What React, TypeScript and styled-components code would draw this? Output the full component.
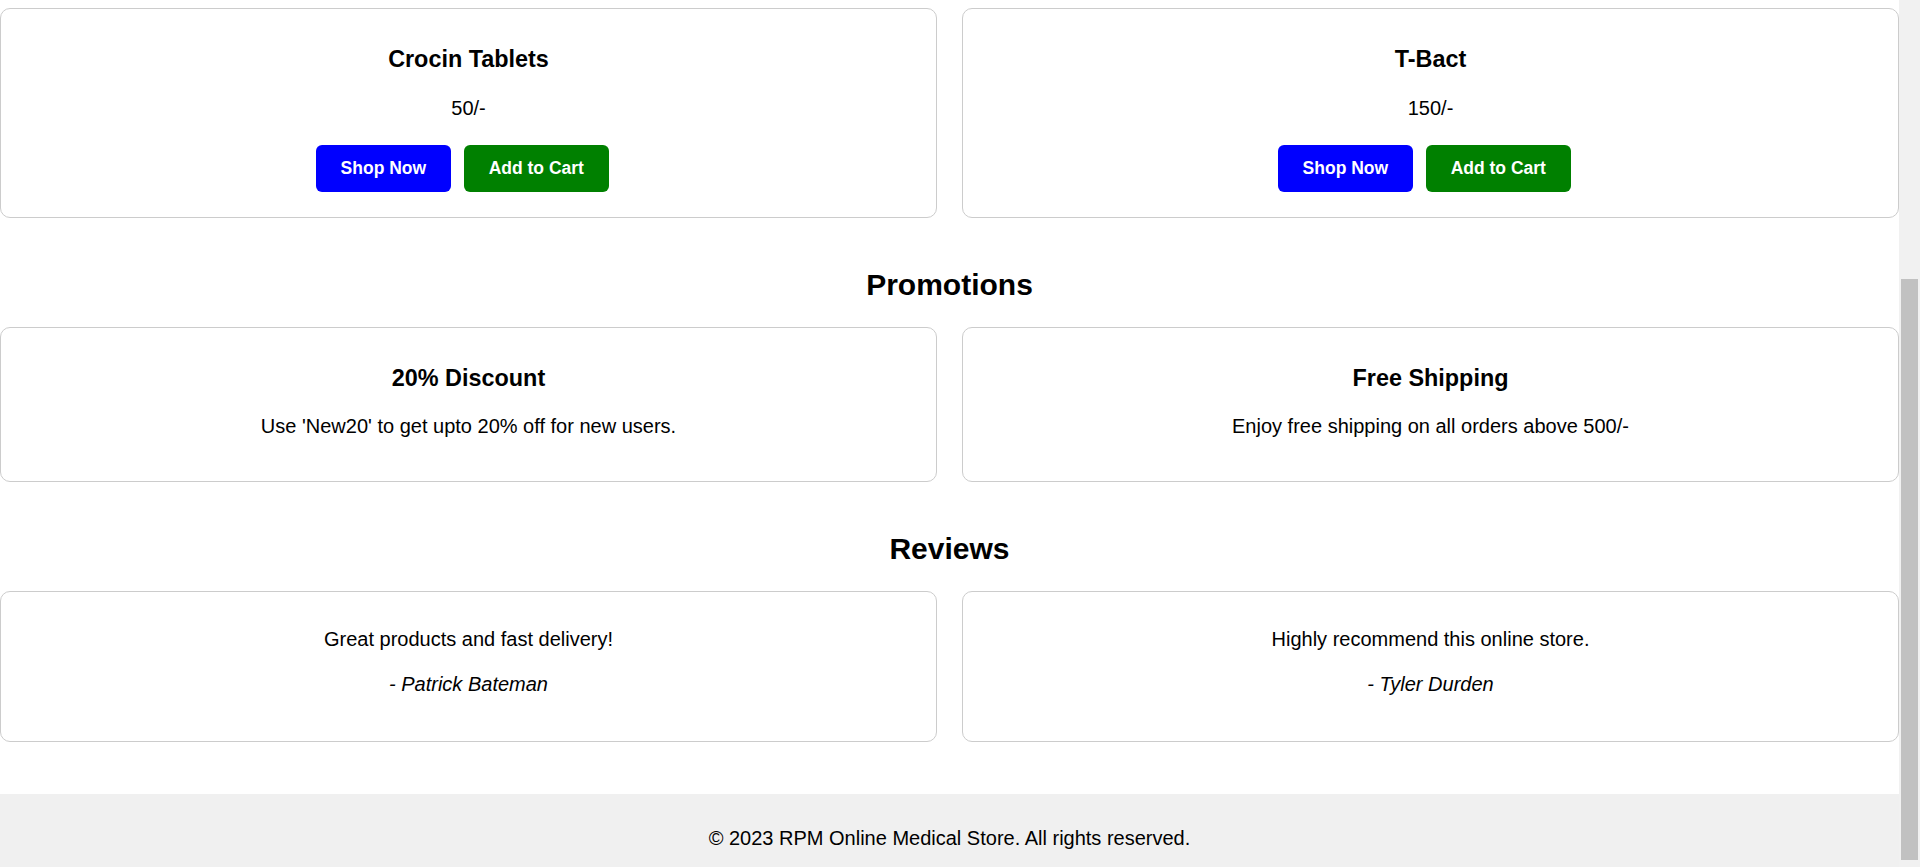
import React from "react";
import styled, { createGlobalStyle } from "styled-components";

const GlobalStyle = createGlobalStyle`
  html, body {
    margin: 0;
    padding: 0;
    background: #ffffff;
  }
  body {
    font-family: "Liberation Sans", Arial, Helvetica, sans-serif;
    color: #000000;
    overflow: hidden;
  }
`;

const Page = styled.div`
  margin-right: 21px;
  padding-top: 8px;
`;

const Section = styled.section`
  padding-bottom: 25px;
`;

const Grid = styled.div`
  display: grid;
  grid-template-columns: 1fr 1fr;
  gap: 25px;
`;

const Card = styled.div<{ $pt: number; $pb: number }>`
  border: 1px solid #cccccc;
  border-radius: 10px;
  padding: ${(p) => `${p.$pt}px 25px ${p.$pb}px`};
  text-align: center;
  background: #ffffff;
`;

const CardTitle = styled.h3`
  font-size: 23.4px;
  font-weight: bold;
  margin: 23.4px 0;
`;

const Text = styled.p<{ $italic?: boolean }>`
  font-size: 20px;
  margin: 20px 0;
  font-style: ${(p) => (p.$italic ? "italic" : "normal")};
`;

const Author = styled(Text)`
  margin-top: 21.5px;
`;

const ButtonRow = styled.div`
  display: flex;
  justify-content: center;
  margin-top: 25px;
`;

const Button = styled.button<{ $bg: string }>`
  font-family: "Liberation Sans", Arial, Helvetica, sans-serif;
  font-size: 17.5px;
  font-weight: bold;
  color: #ffffff;
  background: ${(p) => p.$bg};
  border: none;
  border-radius: 6px;
  padding: 13px 25px;
  margin-right: 12.5px;
  cursor: pointer;
  line-height: normal;
`;

const SectionTitle = styled.h2`
  font-size: 30px;
  font-weight: bold;
  text-align: center;
  margin: 24.9px 0;
`;

const Footer = styled.footer`
  background: #f0f0f0;
  text-align: center;
  padding: 12.5px 0;
  margin-top: 27.5px;
`;

const ScrollTrack = styled.div`
  position: fixed;
  top: 0;
  right: 0;
  width: 21px;
  height: 100vh;
  background: #f1f1f1;
`;

const ScrollThumb = styled.div`
  position: absolute;
  left: 2px;
  width: 17px;
  top: 279px;
  height: 581px;
  background: #c1c1c1;
`;

const products = [
  { name: "Crocin Tablets", price: "50/-" },
  { name: "T-Bact", price: "150/-" },
];

const promotions = [
  { title: "20% Discount", text: "Use 'New20' to get upto 20% off for new users." },
  { title: "Free Shipping", text: "Enjoy free shipping on all orders above 500/-" },
];

const reviews = [
  { text: "Great products and fast delivery!", author: "- Patrick Bateman" },
  { text: "Highly recommend this online store.", author: "- Tyler Durden" },
];

export default function App() {
  return (
    <>
      <GlobalStyle />
      <Page>
        <Section>
          <Grid>
            {products.map((p) => (
              <Card key={p.name} $pt={14} $pb={25}>
                <CardTitle>{p.name}</CardTitle>
                <Text>{p.price}</Text>
                <ButtonRow>
                  <Button $bg="#0000ff">Shop Now</Button>
                  <Button $bg="#008000">Add to Cart</Button>
                </ButtonRow>
              </Card>
            ))}
          </Grid>
        </Section>

        <Section>
          <SectionTitle>Promotions</SectionTitle>
          <Grid>
            {promotions.map((p) => (
              <Card key={p.title} $pt={14} $pb={22.5}>
                <CardTitle>{p.title}</CardTitle>
                <Text>{p.text}</Text>
              </Card>
            ))}
          </Grid>
        </Section>

        <Section>
          <SectionTitle>Reviews</SectionTitle>
          <Grid>
            {reviews.map((r) => (
              <Card key={r.author} $pt={16.5} $pb={25}>
                <Text>{r.text}</Text>
                <Author $italic>{r.author}</Author>
              </Card>
            ))}
          </Grid>
        </Section>

        <Footer>
          <Text>© 2023 RPM Online Medical Store. All rights reserved.</Text>
        </Footer>
      </Page>
      <ScrollTrack>
        <ScrollThumb />
      </ScrollTrack>
    </>
  );
}
